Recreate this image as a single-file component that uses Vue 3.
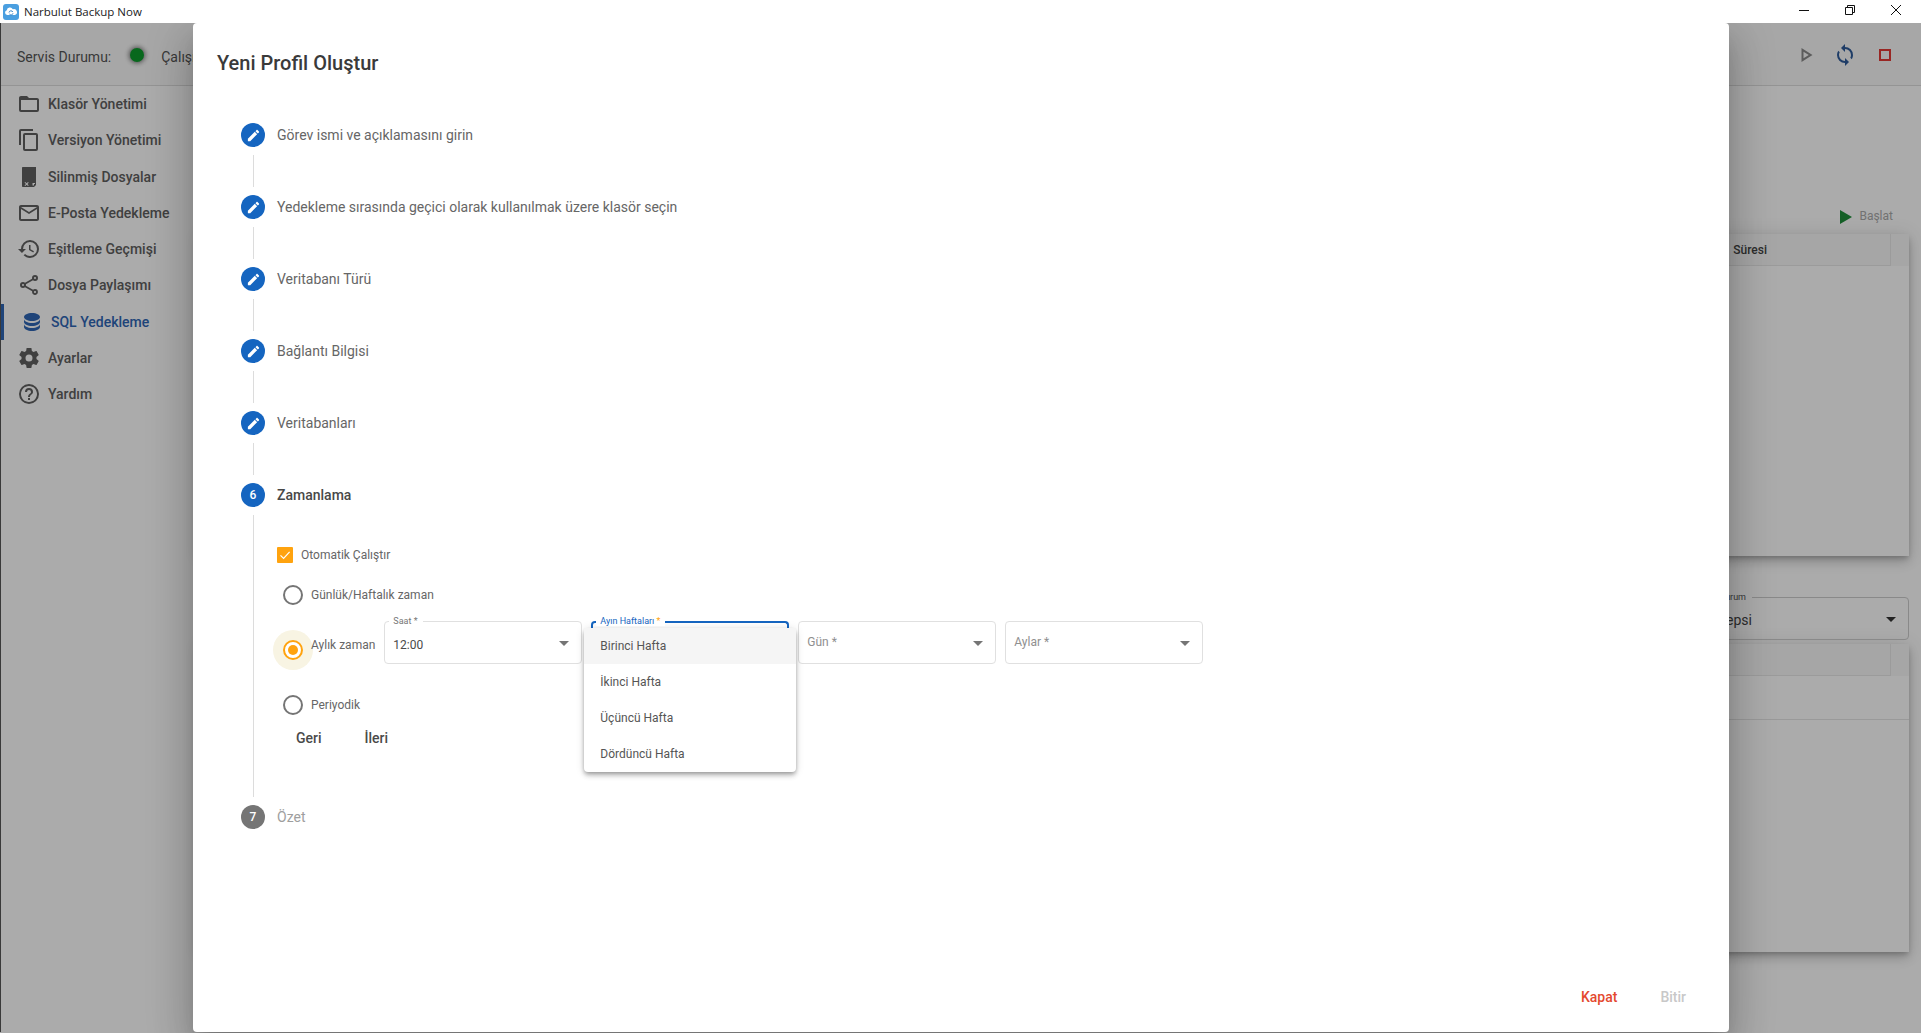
<script setup>
const navItems = [
  { label: 'Klasör Yönetimi', path: 'M20,18H4V8H20M20,6H12L10,4H4C2.89,4 2,4.89 2,6V18A2,2 0 0,0 4,20H20A2,2 0 0,0 22,18V8C22,6.89 21.1,6 20,6Z' },
  { label: 'Versiyon Yönetimi', path: 'M19,21H8V7H19M19,5H8A2,2 0 0,0 6,7V21A2,2 0 0,0 8,23H19A2,2 0 0,0 21,21V7A2,2 0 0,0 19,5M16,1H4A2,2 0 0,0 2,3V17H4V3H16V1Z' },
  { label: 'Silinmiş Dosyalar', path: 'M6,2H19V20L17,22H6C5.4,22 5,21.6 5,21V3C5,2.4 5.4,2 6,2ZM7.5,17.5L9,19L7.5,20.5L8.2,21L9.7,19.7L11,21L11.7,20.3L10.4,19L11.7,17.7L11,17L9.7,18.3L8.2,17ZM15.5,20.5H17V19H18V18H15.5Z' },
  { label: 'E-Posta Yedekleme', path: 'M22 6C22 4.9 21.1 4 20 4H4C2.9 4 2 4.9 2 6V18C2 19.1 2.9 20 4 20H20C21.1 20 22 19.1 22 18V6M20 6L12 11L4 6H20M20 18H4V8L12 13L20 8V18Z' },
  { label: 'Eşitleme Geçmişi', path: 'M13.5,8H12V13L16.28,15.54L17,14.33L13.5,12.25V8M13,3A9,9 0 0,0 4,12H1L4.96,16.03L9,12H6A7,7 0 0,1 13,5A7,7 0 0,1 20,12A7,7 0 0,1 13,19C11.07,19 9.32,18.21 8.06,16.94L6.64,18.36C8.27,20 10.5,21 13,21A9,9 0 0,0 22,12A9,9 0 0,0 13,3' },
  { label: 'Dosya Paylaşımı', path: 'M18,16.08C17.24,16.08 16.56,16.38 16.04,16.85L8.91,12.7C8.96,12.47 9,12.24 9,12C9,11.76 8.96,11.53 8.91,11.3L15.96,7.19C16.5,7.69 17.21,8 18,8A3,3 0 0,0 21,5A3,3 0 0,0 18,2A3,3 0 0,0 15,5C15,5.24 15.04,5.47 15.09,5.7L8.04,9.81C7.5,9.31 6.79,9 6,9A3,3 0 0,0 3,12A3,3 0 0,0 6,15C6.79,15 7.5,14.69 8.04,14.19L15.16,18.34C15.11,18.55 15.08,18.77 15.08,19C15.08,20.61 16.39,21.91 18,21.91C19.61,21.91 20.92,20.61 20.92,19A2.92,2.92 0 0,0 18,16.08M18,4A1,1 0 0,1 19,5A1,1 0 0,1 18,6A1,1 0 0,1 17,5A1,1 0 0,1 18,4M6,13A1,1 0 0,1 5,12A1,1 0 0,1 6,11A1,1 0 0,1 7,12A1,1 0 0,1 6,13M18,20C17.45,20 17,19.55 17,19C17,18.45 17.45,18 18,18C18.55,18 19,18.45 19,19C19,19.55 18.55,20 18,20Z' },
  { label: 'SQL Yedekleme', active: true, path: 'M12,3C7.58,3 4,4.79 4,7C4,9.21 7.58,11 12,11C16.42,11 20,9.21 20,7C20,4.79 16.42,3 12,3M4,9V12C4,14.21 7.58,16 12,16C16.42,16 20,14.21 20,12V9C20,11.21 16.42,13 12,13C7.58,13 4,11.21 4,9M4,14V17C4,19.21 7.58,21 12,21C16.42,21 20,19.21 20,17V14C20,16.21 16.42,18 12,18C7.58,18 4,16.21 4,14Z' },
  { label: 'Ayarlar', path: 'M12,15.5A3.5,3.5 0 0,1 8.5,12A3.5,3.5 0 0,1 12,8.5A3.5,3.5 0 0,1 15.5,12A3.5,3.5 0 0,1 12,15.5M19.43,12.97C19.47,12.65 19.5,12.33 19.5,12C19.5,11.67 19.47,11.34 19.43,11L21.54,9.37C21.73,9.22 21.78,8.95 21.66,8.73L19.66,5.27C19.54,5.05 19.27,4.96 19.05,5.05L16.56,6.05C16.04,5.66 15.5,5.32 14.87,5.07L14.5,2.42C14.46,2.18 14.25,2 14,2H10C9.75,2 9.54,2.18 9.5,2.42L9.13,5.07C8.5,5.32 7.96,5.66 7.44,6.05L4.95,5.05C4.73,4.96 4.46,5.05 4.34,5.27L2.34,8.73C2.21,8.95 2.27,9.22 2.46,9.37L4.57,11C4.53,11.34 4.5,11.67 4.5,12C4.5,12.33 4.53,12.65 4.57,12.97L2.46,14.63C2.27,14.78 2.21,15.05 2.34,15.27L4.34,18.73C4.46,18.95 4.73,19.03 4.95,18.95L7.44,17.94C7.96,18.34 8.5,18.68 9.13,18.93L9.5,21.58C9.54,21.82 9.75,22 10,22H14C14.25,22 14.46,21.82 14.5,21.58L14.87,18.93C15.5,18.67 16.04,18.34 16.56,17.94L19.05,18.95C19.27,19.03 19.54,18.95 19.66,18.73L21.66,15.27C21.78,15.05 21.73,14.78 21.54,14.63L19.43,12.97Z' },
  { label: 'Yardım', path: 'M11,18H13V16H11V18M12,2A10,10 0 0,0 2,12A10,10 0 0,0 12,22A10,10 0 0,0 22,12A10,10 0 0,0 12,2M12,20C7.59,20 4,16.41 4,12C4,7.59 7.59,4 12,4C16.41,4 20,7.59 20,12C20,16.41 16.41,20 12,20M12,6A4,4 0 0,0 8,10H10A2,2 0 0,1 12,8A2,2 0 0,1 14,10C14,12 11,11.75 11,15H13C13,12.75 16,12.5 16,10A4,4 0 0,0 12,6Z' }
]
const doneSteps = [
  'Görev ismi ve açıklamasını girin',
  'Yedekleme sırasında geçici olarak kullanılmak üzere klasör seçin',
  'Veritabanı Türü',
  'Bağlantı Bilgisi',
  'Veritabanları'
]
const weeks = ['Birinci Hafta', 'İkinci Hafta', 'Üçüncü Hafta', 'Dördüncü Hafta']
const pencil = 'M20.71,7.04C21.1,6.65 21.1,6 20.71,5.63L18.37,3.29C18,2.9 17.35,2.9 16.96,3.29L15.12,5.12L18.87,8.87M3,17.25V21H6.75L17.81,9.93L14.06,6.18L3,17.25Z'
</script>

<template>
  <div class="root">
    <div class="titlebar">
      <div class="title-left">
        <svg class="logo" viewBox="0 0 16 16" width="16" height="16">
          <rect width="16" height="16" rx="3" fill="#4a9fe0" />
          <path d="M4.2,11A2.4,2.4 0 0,1 3.8,6.3A3.2,3.2 0 0,1 9.8,5.3A2.9,2.9 0 0,1 12,11Z" fill="#fff" />
          <path d="M6,8.5A2,2 0 0,1 9.8,8M10,9.3A2,2 0 0,1 6.4,10" fill="none" stroke="#3a86c8" stroke-width="1" />
        </svg>
        <span class="app-name">Narbulut Backup Now</span>
      </div>
      <div class="win-controls">
        <svg viewBox="0 0 10 10" width="10" height="10"><path d="M0,5.5H10" stroke="#111" stroke-width="1" fill="none" /></svg>
        <svg viewBox="0 0 10 10" width="10" height="10"><path d="M0.5,2.5H7.5V9.5H0.5ZM2.5,2.5V0.5H9.5V7.5H7.5" stroke="#111" stroke-width="1" fill="none" /></svg>
        <svg viewBox="0 0 10 10" width="10" height="10"><path d="M0,0L10,10M10,0L0,10" stroke="#111" stroke-width="1" fill="none" /></svg>
      </div>
    </div>

    <div class="app">
      <header class="app-header">
        <span class="status-label">Servis Durumu:</span>
        <span class="status-dot"></span>
        <span class="status-text">Çalışıyor</span>
        <div class="header-actions">
          <svg class="act-play" viewBox="0 0 24 24" width="24" height="24"><path d="M8.5,8.64L13.77,12L8.5,15.36V8.64M6.5,5V19L17.5,12" fill="#8a8a8a" /></svg>
          <svg class="act-sync" viewBox="0 0 24 24" width="24" height="24"><path d="M12,18A6,6 0 0,1 6,12C6,11 6.25,10.03 6.7,9.2L5.24,7.74C4.46,8.97 4,10.43 4,12A8,8 0 0,0 12,20V23L16,19L12,15M12,4V1L8,5L12,9V6A6,6 0 0,1 18,12C18,13 17.75,13.97 17.3,14.8L18.76,16.26C19.54,15.03 20,13.57 20,12A8,8 0 0,0 12,4Z" fill="#2f5c9a" /></svg>
          <span class="act-stop"></span>
        </div>
      </header>

      <div class="app-body">
        <nav class="sidebar">
          <div v-for="item in navItems" :key="item.label" class="nav-item" :class="{ active: item.active }">
            <svg viewBox="0 0 24 24" width="24" height="24"><path :d="item.path" fill="currentColor" /></svg>
            <span>{{ item.label }}</span>
          </div>
        </nav>
        <main class="content">
          <div class="toolbar">
            <svg viewBox="0 0 12 14" width="12" height="14"><path d="M0,0L12,7L0,14Z" fill="#1f8f3a" /></svg>
            <span>Başlat</span>
          </div>
          <section class="card card-top">
            <div class="table-head"><div class="head-cell"><span>Süresi</span></div></div>
          </section>
          <div class="filter">
            <span class="filter-label">Durum</span>
            <span class="filter-value">Hepsi</span>
            <i class="caret dark"></i>
          </div>
          <section class="card card-bottom">
            <div class="table-head"><div class="head-cell"></div></div>
            <div class="table-row"></div>
          </section>
        </main>
      </div>
    </div>

    <div class="scrim"></div>

    <div class="dialog">
      <h2 class="dialog-title">Yeni Profil Oluştur</h2>
      <div class="stepper">
        <template v-for="step in doneSteps" :key="step">
          <div class="step">
            <span class="step-circle">
              <svg viewBox="0 0 24 24" width="15" height="15"><path :d="pencil" fill="#fff" /></svg>
            </span>
            <span class="step-label">{{ step }}</span>
          </div>
          <div class="connector"></div>
        </template>

        <div class="step">
          <span class="step-circle">6</span>
          <span class="step-label current">Zamanlama</span>
        </div>
        <div class="step-content">
          <label class="check-row">
            <span class="checkbox">
              <svg viewBox="0 0 16 16" width="16" height="16"><path d="M3.5,8.3L6.6,11.4L12.6,4.8" stroke="#fff" stroke-width="1.2" fill="none" /></svg>
            </span>
            <span>Otomatik Çalıştır</span>
          </label>

          <div class="radio-row first">
            <span class="radio"></span>
            <span class="radio-label">Günlük/Haftalık zaman</span>
          </div>

          <div class="radio-row monthly">
            <span class="radio checked"></span>
            <span class="radio-label">Aylık zaman</span>
            <div class="fields">
              <div class="field">
                <span class="float-label">Saat *</span>
                <span class="field-value">12:00</span>
                <i class="caret"></i>
              </div>
              <div class="field focused">
                <span class="float-label">Ayın Haftaları <b>*</b></span>
                <ul class="menu">
                  <li v-for="(w, i) in weeks" :key="w" :class="{ hover: i === 0 }">{{ w }}</li>
                </ul>
              </div>
              <div class="field">
                <span class="placeholder">Gün *</span>
                <i class="caret"></i>
              </div>
              <div class="field">
                <span class="placeholder">Aylar *</span>
                <i class="caret"></i>
              </div>
            </div>
          </div>

          <div class="radio-row last">
            <span class="radio"></span>
            <span class="radio-label">Periyodik</span>
          </div>

          <div class="step-buttons">
            <button type="button">Geri</button>
            <button type="button">İleri</button>
          </div>
        </div>

        <div class="step">
          <span class="step-circle pending">7</span>
          <span class="step-label muted">Özet</span>
        </div>
      </div>

      <footer class="dialog-actions">
        <button type="button" class="close">Kapat</button>
        <button type="button" class="finish">Bitir</button>
      </footer>
    </div>
  </div>
</template>

<style>
html, body { margin: 0; background: #fff; overflow: hidden; }
</style>

<style scoped>
* { box-sizing: border-box; }
.root {
  position: relative;
  width: 1921px;
  height: 1033px;
  overflow: hidden;
  background: #fff;
  font-family: Roboto, "Liberation Sans", sans-serif;
  color: #333;
}
.titlebar {
  height: 23px;
  display: flex;
  align-items: center;
  justify-content: space-between;
  background: #fff;
  padding-left: 3px;
  position: relative;
  z-index: 5;
}
.title-left { display: flex; align-items: center; gap: 5px; }
.logo { display: block; }
.app-name { font: 11.5px "Open Sans", "Noto Sans", sans-serif; color: #222; }
.win-controls { display: flex; gap: 36px; padding-right: 20px; margin-top: -3px; }
.win-controls svg { display: block; }

.app {
  height: 1009px;
  display: flex;
  flex-direction: column;
  border-left: 1px solid #555;
  background: #fff;
}
.app-header {
  height: 63px;
  flex: none;
  display: flex;
  align-items: center;
  padding-left: 16px;
  font-size: 14px;
  color: #555;
  border-bottom: 1px solid #ddd;
  background: #fafafa;
}
.status-dot {
  width: 14px;
  height: 14px;
  margin: 1px 17px 0 19px;
  border-radius: 50%;
  background: #0c9c2c;
  box-shadow: 0 0 5px 1px rgba(0, 0, 0, .55);
}
.status-label, .status-text { margin-top: 6px; }
.header-actions {
  margin-left: auto;
  display: flex;
  align-items: center;
  gap: 16px;
  padding-right: 30px;
  margin-top: 1px;
}
.act-play { margin-right: -2px; }
.act-stop { width: 12px; height: 12px; border: 2px solid #e53935; margin-left: 6px; }
.app-body { flex: 1; display: flex; min-height: 0; }
.sidebar { width: 200px; flex: none; }
.nav-item {
  height: 36.25px;
  display: flex;
  align-items: center;
  gap: 7px;
  padding-left: 16px;
  font-size: 14px;
  font-weight: 500;
  color: #606060;
}
.nav-item svg { display: block; flex: none; }
.nav-item.active {
  color: #2f66b5;
  border-left: 3px solid #2f66b5;
  padding-left: 16px;
}
.content { flex: 1; padding: 115px 12px 0 0; display: flex; flex-direction: column; }
.toolbar {
  height: 30px;
  margin-bottom: 3px;
  display: flex;
  align-items: center;
  justify-content: flex-end;
  gap: 7px;
  padding-right: 16px;
  font-size: 12px;
  color: #aaa;
}
.toolbar svg { margin-top: 2px; }
.card {
  background: #fff;
  box-shadow: 0 3px 5px -1px rgba(0, 0, 0, .2), 0 6px 10px rgba(0, 0, 0, .14), 0 1px 18px rgba(0, 0, 0, .12);
}
.card-top { height: 322px; }
.card-bottom { height: 308px; margin-top: 4px; }
.table-head { height: 32px; background: #f8f8f8; padding-right: 18px; }
.head-cell {
  height: 32px;
  display: flex;
  align-items: center;
  justify-content: flex-end;
  background: #f8f8f8;
  border-right: 1px solid #e8e8e8;
  border-bottom: 1px solid #e8e8e8;
  font-size: 12px;
  font-weight: 500;
  color: #444;
}
.head-cell span { margin-right: 123px; }
.table-row { height: 44px; border-bottom: 1px solid #e4e4e4; }
.filter {
  position: relative;
  height: 43px;
  margin-top: 41px;
  border: 1px solid #ccc;
  border-radius: 4px;
  display: flex;
  align-items: center;
  justify-content: flex-end;
}
.filter-label {
  position: absolute;
  top: -6px;
  right: 156px;
  font-size: 9px;
  line-height: 10px;
  background: #fff;
  padding-right: 6px;
  color: #555;
}
.filter-value { position: absolute; right: 156px; top: 14px; font-size: 14px; line-height: 16px; color: #444; }
.caret {
  position: absolute;
  right: 12px;
  top: 19px;
  width: 0;
  height: 0;
  border-left: 5px solid transparent;
  border-right: 5px solid transparent;
  border-top: 5px solid #757575;
}
.caret.dark { border-top-color: #333; top: 19px; right: 12px; }

.scrim {
  position: absolute;
  left: 0;
  right: 0;
  top: 23px;
  bottom: 0;
  background: rgba(0, 0, 0, .33);
}
.dialog {
  position: absolute;
  left: 193px;
  top: 23px;
  width: 1536px;
  height: 1009px;
  background: #fff;
  display: flex;
  flex-direction: column;
  border-radius: 4px;
  box-shadow: 0 11px 15px -7px rgba(0, 0, 0, .2), 0 24px 38px 3px rgba(0, 0, 0, .14), 0 9px 46px 8px rgba(0, 0, 0, .12);
}
.dialog-title {
  margin: 0;
  padding: 24px 24px 0;
  font-size: 20px;
  line-height: 32px;
  font-weight: 500;
  color: #3a3a3a;
}
.stepper { padding: 44px 0 0 48px; flex: 1; }
.step { display: flex; align-items: center; gap: 12px; height: 24px; }
.step-circle {
  width: 24px;
  height: 24px;
  flex: none;
  border-radius: 50%;
  background: #1565c0;
  color: #fff;
  font-size: 12px;
  font-weight: 500;
  display: flex;
  align-items: center;
  justify-content: center;
}
.step-circle.pending { background: #757575; }
.step-label { font-size: 14px; color: #666; }
.step-label.current { color: #484848; font-weight: 500; }
.step-label.muted { color: #9e9e9e; }
.connector { height: 32px; margin: 8px 0 8px 12px; border-left: 1px solid #dcdcdc; }
.step-content {
  margin: 8px 0 8px 12px;
  height: 282px;
  border-left: 1px solid #dcdcdc;
  padding: 32px 0 0 23px;
  font-size: 12px;
  color: #666;
}
.check-row { display: flex; align-items: center; gap: 8px; height: 16px; font-size: 12px; }
.checkbox { width: 16px; height: 16px; background: #ffa30f; border-radius: 1px; flex: none; }
.checkbox svg { display: block; }
.radio-row { display: flex; margin-left: 6px; }
.radio-row.first { margin-top: 22px; align-items: center; }
.radio-row.monthly { margin-top: 16px; }
.radio-row.monthly .radio { margin-top: 19px; }
.radio-row.monthly .radio-label { margin-top: 16px; }
.radio-row.last { margin-top: 31px; align-items: center; }
.radio {
  width: 20px;
  height: 20px;
  flex: none;
  border: 2px solid #757575;
  border-radius: 50%;
  position: relative;
}
.radio.checked {
  border-color: #ffa30f;
  box-shadow: 0 0 0 10px #f8f4e3;
  background: #fff;
}
.radio.checked::after {
  content: "";
  position: absolute;
  inset: 3px;
  border-radius: 50%;
  background: #ffa30f;
}
.radio-label { margin-left: 8px; line-height: 16px; white-space: nowrap; position: relative; }
.fields { display: flex; gap: 9.5px; margin-left: 9px; }
.field {
  position: relative;
  width: 197.5px;
  height: 43px;
  border: 1px solid #e0e0e0;
  border-radius: 4px;
  font-size: 12px;
}
.field.focused { border: 2px solid #1565c0; border-bottom: none; border-left-color: #1565c0; }
.float-label {
  position: absolute;
  left: 4px;
  top: -6px;
  padding: 0 5px 0 4px;
  font-size: 9px;
  line-height: 10px;
  background: #fff;
  color: #777;
  white-space: nowrap;
}
.focused .float-label { color: #1565c0; left: 3px; top: -7px; z-index: 3; }
.focused .float-label b { color: #ffa30f; font-weight: 400; }
.field-value { position: absolute; left: 8px; top: 16px; line-height: 14px; color: #4a4a4a; }
.placeholder { position: absolute; left: 8px; top: 13px; line-height: 14px; color: #8f8f8f; }
.field .caret { right: 12px; top: 19px; }
.menu {
  position: absolute;
  z-index: 2;
  left: -9px;
  top: 5px;
  width: 212px;
  margin: 0;
  padding: 0;
  list-style: none;
  background: #fff;
  border-radius: 4px;
  color: #555;
  box-shadow: 0 2px 4px -1px rgba(0, 0, 0, .3), 0 4px 5px rgba(0, 0, 0, .14), 0 1px 10px rgba(0, 0, 0, .12);
}
.menu li { height: 36px; line-height: 36px; padding-left: 16px; font-size: 12px; }
.menu li.hover { background: #f5f5f5; }
.step-buttons { display: flex; gap: 11px; margin: 5px 0 0 3px; }
.step-buttons button, .dialog-actions button {
  border: 0;
  background: none;
  height: 36px;
  padding: 0 16px;
  font: 500 14px Roboto, "Liberation Sans", sans-serif;
  color: #4a4a4a;
}
.dialog-actions { display: flex; justify-content: flex-end; gap: 11px; padding: 0 27px 17px 0; }
.dialog-actions .close { color: #e4492f; }
.dialog-actions .finish { color: #c8c8c8; }
</style>
